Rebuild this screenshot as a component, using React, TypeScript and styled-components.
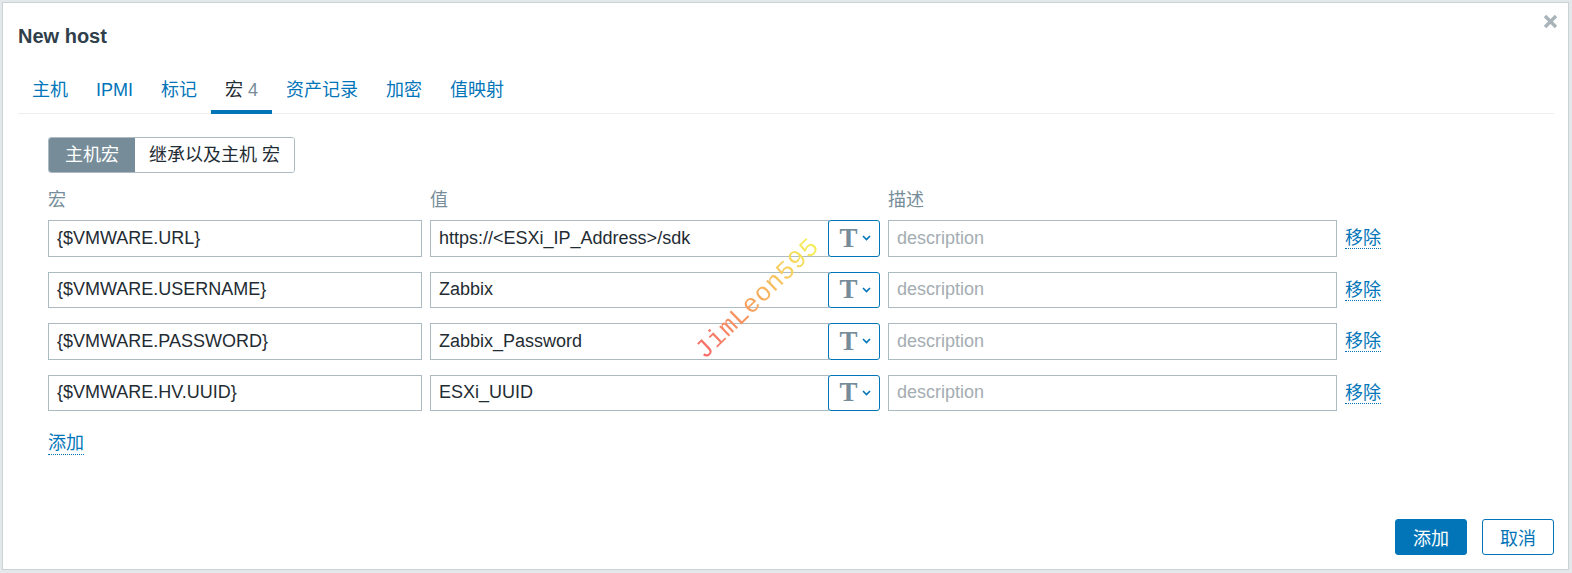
import React from "react";
import styled, { createGlobalStyle } from "styled-components";

const GlobalStyle = createGlobalStyle`
  html, body {
    margin: 0;
    padding: 0;
    background: #e4e8ea;
  }
  body {
    font-family: "Liberation Sans", Arial, "Noto Sans CJK SC", sans-serif;
    color: #1f2c33;
  }
`;

const FONT = `"Liberation Sans", Arial, "Noto Sans CJK SC", sans-serif`;
const BLUE = "#0275b8";
const GREY = "#768d99";
const BORDER = "#acbbc2";

const Backdrop = styled.div`
  width: 1572px;
  height: 573px;
  padding: 2px;
  box-sizing: border-box;
  background: #e4e8ea;
`;

const Dialog = styled.div`
  position: relative;
  width: 1567px;
  height: 568px;
  box-sizing: border-box;
  border: 1px solid #cad3d8;
  background: #fff;
  display: flex;
  flex-direction: column;
  padding: 21px 14px 14px 15px;
`;

const Title = styled.h4`
  margin: 0;
  font: bold 20px/24px ${FONT};
  color: #2f404b;
`;

const CloseButton = styled.button`
  position: absolute;
  top: 8px;
  right: 8px;
  width: 20px;
  height: 20px;
  padding: 0;
  border: none;
  background: none;
  display: flex;
  align-items: center;
  justify-content: center;
`;

const TabList = styled.ul`
  list-style: none;
  margin: 30px 0 0;
  padding: 0;
  display: flex;
  border-bottom: 1px solid #ebeef0;
`;

const Tab = styled.li<{ $active?: boolean }>`
  padding: 0 14px 8px;
  font: 18px/24px ${FONT};
  color: ${(p) => (p.$active ? "#1f2c33" : BLUE)};
  border-bottom: 4px solid ${(p) => (p.$active ? BLUE : "transparent")};
  margin-bottom: -1px;
  cursor: pointer;
`;

const TabCount = styled.span`
  color: ${GREY};
  margin-left: 5px;
`;

const Panel = styled.div`
  padding: 23px 0 0 30px;
  display: flex;
  flex-direction: column;
  align-items: flex-start;
`;

const Segmented = styled.div`
  display: flex;
  height: 36px;
  border: 1px solid ${BORDER};
  border-radius: 3px;
  overflow: hidden;
  box-sizing: border-box;
`;

const SegmentButton = styled.button<{ $active?: boolean }>`
  border: none;
  padding: 0 ${(p) => (p.$active ? 16 : 14)}px;
  font: 18px/34px ${FONT};
  background: ${(p) => (p.$active ? GREY : "#fff")};
  color: ${(p) => (p.$active ? "#fff" : "#1f2c33")};
`;

const MacroGrid = styled.div`
  margin-top: 15px;
  display: grid;
  grid-template-columns: 374px 450px 449px auto;
  column-gap: 8px;
  row-gap: 15px;
  align-items: center;
`;

const ColumnHeader = styled.div`
  font: 18px/24px ${FONT};
  color: ${GREY};
  margin-bottom: -7px;
`;

const TextInput = styled.input`
  height: 36.5px;
  box-sizing: border-box;
  width: 100%;
  border: 1px solid ${BORDER};
  padding: 0 8px;
  font: 18px ${FONT};
  color: #1f2c33;
  outline: none;
  background: #fff;
  &::placeholder {
    color: #a4adb2;
  }
`;

const ValueCell = styled.div`
  display: flex;
  height: 36.5px;
`;

const ValueInput = styled(TextInput)`
  flex: 1;
  min-width: 0;
`;

const TypeButton = styled.button`
  width: 52px;
  height: 100%;
  box-sizing: border-box;
  border: 1px solid ${BLUE};
  border-radius: 3px;
  background: #fff;
  display: flex;
  align-items: center;
  justify-content: center;
  gap: 4px;
  padding: 0 0 0 2px;
  margin-left: -1px;
`;

const TypeGlyph = styled.span`
  font: bold 27px/1 "Liberation Serif", "Times New Roman", serif;
  color: ${GREY};
`;

const Link = styled.a`
  font: 18px/22px ${FONT};
  color: ${BLUE};
  text-decoration: none;
  border-bottom: 1px dotted ${BLUE};
  cursor: pointer;
`;

const AddLink = styled(Link)`
  margin-top: 21px;
`;

const Footer = styled.div`
  margin-top: auto;
  display: flex;
  justify-content: flex-end;
  gap: 15px;
`;

const FooterButton = styled.button<{ $primary?: boolean }>`
  height: 36px;
  padding: 0 17px;
  border-radius: 3px;
  border: 1px solid ${BLUE};
  background: ${(p) => (p.$primary ? BLUE : "#fff")};
  color: ${(p) => (p.$primary ? "#fff" : BLUE)};
  font: 18px ${FONT};
`;

const Watermark = styled.div`
  position: absolute;
  left: 674px;
  top: 283px;
  transform: rotate(-44deg);
  font: 26px/1 "Liberation Mono", "Courier New", monospace;
  background: linear-gradient(90deg, #f56a6a 0%, #f7a25c 45%, #f5f25e 100%);
  -webkit-background-clip: text;
  background-clip: text;
  color: transparent;
  pointer-events: none;
  letter-spacing: 0.5px;
`;

interface Macro {
  name: string;
  value: string;
}

const macros: Macro[] = [
  { name: "{$VMWARE.URL}", value: "https://<ESXi_IP_Address>/sdk" },
  { name: "{$VMWARE.USERNAME}", value: "Zabbix" },
  { name: "{$VMWARE.PASSWORD}", value: "Zabbix_Password" },
  { name: "{$VMWARE.HV.UUID}", value: "ESXi_UUID" },
];

const tabs = ["主机", "IPMI", "标记", "宏", "资产记录", "加密", "值映射"];

const Chevron = () => (
  <svg width="9" height="6" viewBox="0 0 9 6">
    <path d="M1 1l3.5 3.5L8 1" fill="none" stroke={BLUE} strokeWidth="1.6" />
  </svg>
);

const CloseIcon = () => (
  <svg width="15" height="15" viewBox="0 0 15 15">
    <path d="M2 2l11 11M13 2L2 13" stroke="#a9b4ba" strokeWidth="3.4" />
  </svg>
);

const App: React.FC = () => {
  return (
    <>
      <GlobalStyle />
      <Backdrop>
        <Dialog>
          <Title>New host</Title>
          <CloseButton>
            <CloseIcon />
          </CloseButton>

          <TabList>
            {tabs.map((t) => (
              <Tab key={t} $active={t === "宏"}>
                {t}
                {t === "宏" && <TabCount>4</TabCount>}
              </Tab>
            ))}
          </TabList>

          <Panel>
            <Segmented>
              <SegmentButton $active>主机宏</SegmentButton>
              <SegmentButton>继承以及主机 宏</SegmentButton>
            </Segmented>

            <MacroGrid>
              <ColumnHeader>宏</ColumnHeader>
              <ColumnHeader>值</ColumnHeader>
              <ColumnHeader>描述</ColumnHeader>
              <div />
              {macros.map((m) => (
                <React.Fragment key={m.name}>
                  <TextInput defaultValue={m.name} />
                  <ValueCell>
                    <ValueInput defaultValue={m.value} />
                    <TypeButton>
                      <TypeGlyph>T</TypeGlyph>
                      <Chevron />
                    </TypeButton>
                  </ValueCell>
                  <TextInput placeholder="description" />
                  <div>
                    <Link>移除</Link>
                  </div>
                </React.Fragment>
              ))}
            </MacroGrid>

            <AddLink>添加</AddLink>
          </Panel>

          <Footer>
            <FooterButton $primary>添加</FooterButton>
            <FooterButton>取消</FooterButton>
          </Footer>

          <Watermark>JimLeon595</Watermark>
        </Dialog>
      </Backdrop>
    </>
  );
};

export default App;
